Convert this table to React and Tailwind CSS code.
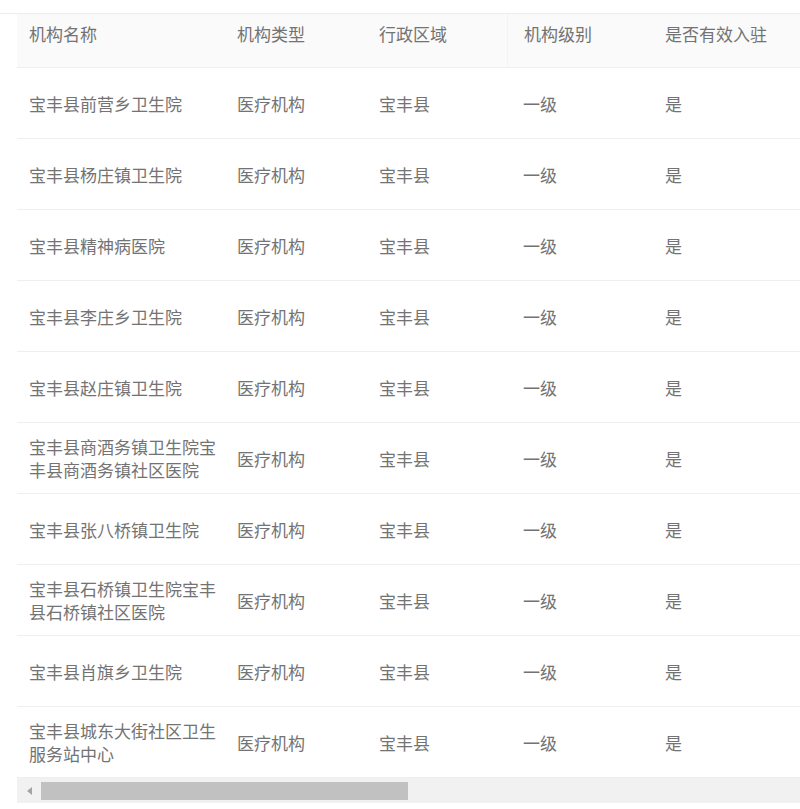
import React from 'react'

const rows = [
    { name: '宝丰县前营乡卫生院' },
    { name: '宝丰县杨庄镇卫生院' },
    { name: '宝丰县精神病医院' },
    { name: '宝丰县李庄乡卫生院' },
    { name: '宝丰县赵庄镇卫生院' },
    { name: '宝丰县商酒务镇卫生院宝丰县商酒务镇社区医院' },
    { name: '宝丰县张八桥镇卫生院' },
    { name: '宝丰县石桥镇卫生院宝丰县石桥镇社区医院' },
    { name: '宝丰县肖旗乡卫生院' },
    { name: '宝丰县城东大街社区卫生服务站中心' },
]

export default function App() {
    return (
        <div
            className="w-[800px] h-[809px] overflow-hidden bg-white pt-[13px] text-[#737373] text-[17px] leading-[23px]"
            style={{ fontFamily: '"Noto Sans CJK SC", "Noto Sans", sans-serif' }}
        >
            <div className="border-t border-[#ececec]">
                <div className="ml-[17px]">
                    {/* header */}
                    <div className="flex h-[54px] items-start bg-[#fafafa] border-b border-[#efefef] pt-[8px]">
                        <div className="w-[208px] shrink-0 pl-[12px]">机构名称</div>
                        <div className="w-[142px] shrink-0 pl-[12px]">机构类型</div>
                        <div className="w-[140px] shrink-0 pl-[12px]">行政区域</div>
                        <div className="w-[146px] shrink-0 pl-[16px] border-l border-[#f4f4f4] -mt-[8px] pt-[8px] h-[53px]">机构级别</div>
                        <div className="flex-1 pl-[12px] whitespace-nowrap">是否有效入驻</div>
                    </div>

                    {rows.map((r, i) => (
                        <div key={i} className="flex h-[71px] items-center border-b border-[#efefef]">
                            <div className="w-[208px] shrink-0 pl-[12px] pr-[8px]">{r.name}</div>
                            <div className="w-[142px] shrink-0 pl-[12px]">医疗机构</div>
                            <div className="w-[140px] shrink-0 pl-[12px]">宝丰县</div>
                            <div className="w-[146px] shrink-0 pl-[16px]">一级</div>
                            <div className="flex-1 pl-[12px]">是</div>
                        </div>
                    ))}

                    {/* horizontal scrollbar */}
                    <div className="flex h-[25px] items-center bg-[#f1f1f1]">
                        <div className="w-[24px] shrink-0 flex justify-center">
                            <div className="w-0 h-0 border-y-[4px] border-y-transparent border-r-[5px] border-r-[#a3a3a3]" />
                        </div>
                        <div className="w-[367px] h-[18px] bg-[#c1c1c1]" />
                    </div>
                </div>
            </div>
        </div>
    )
}
